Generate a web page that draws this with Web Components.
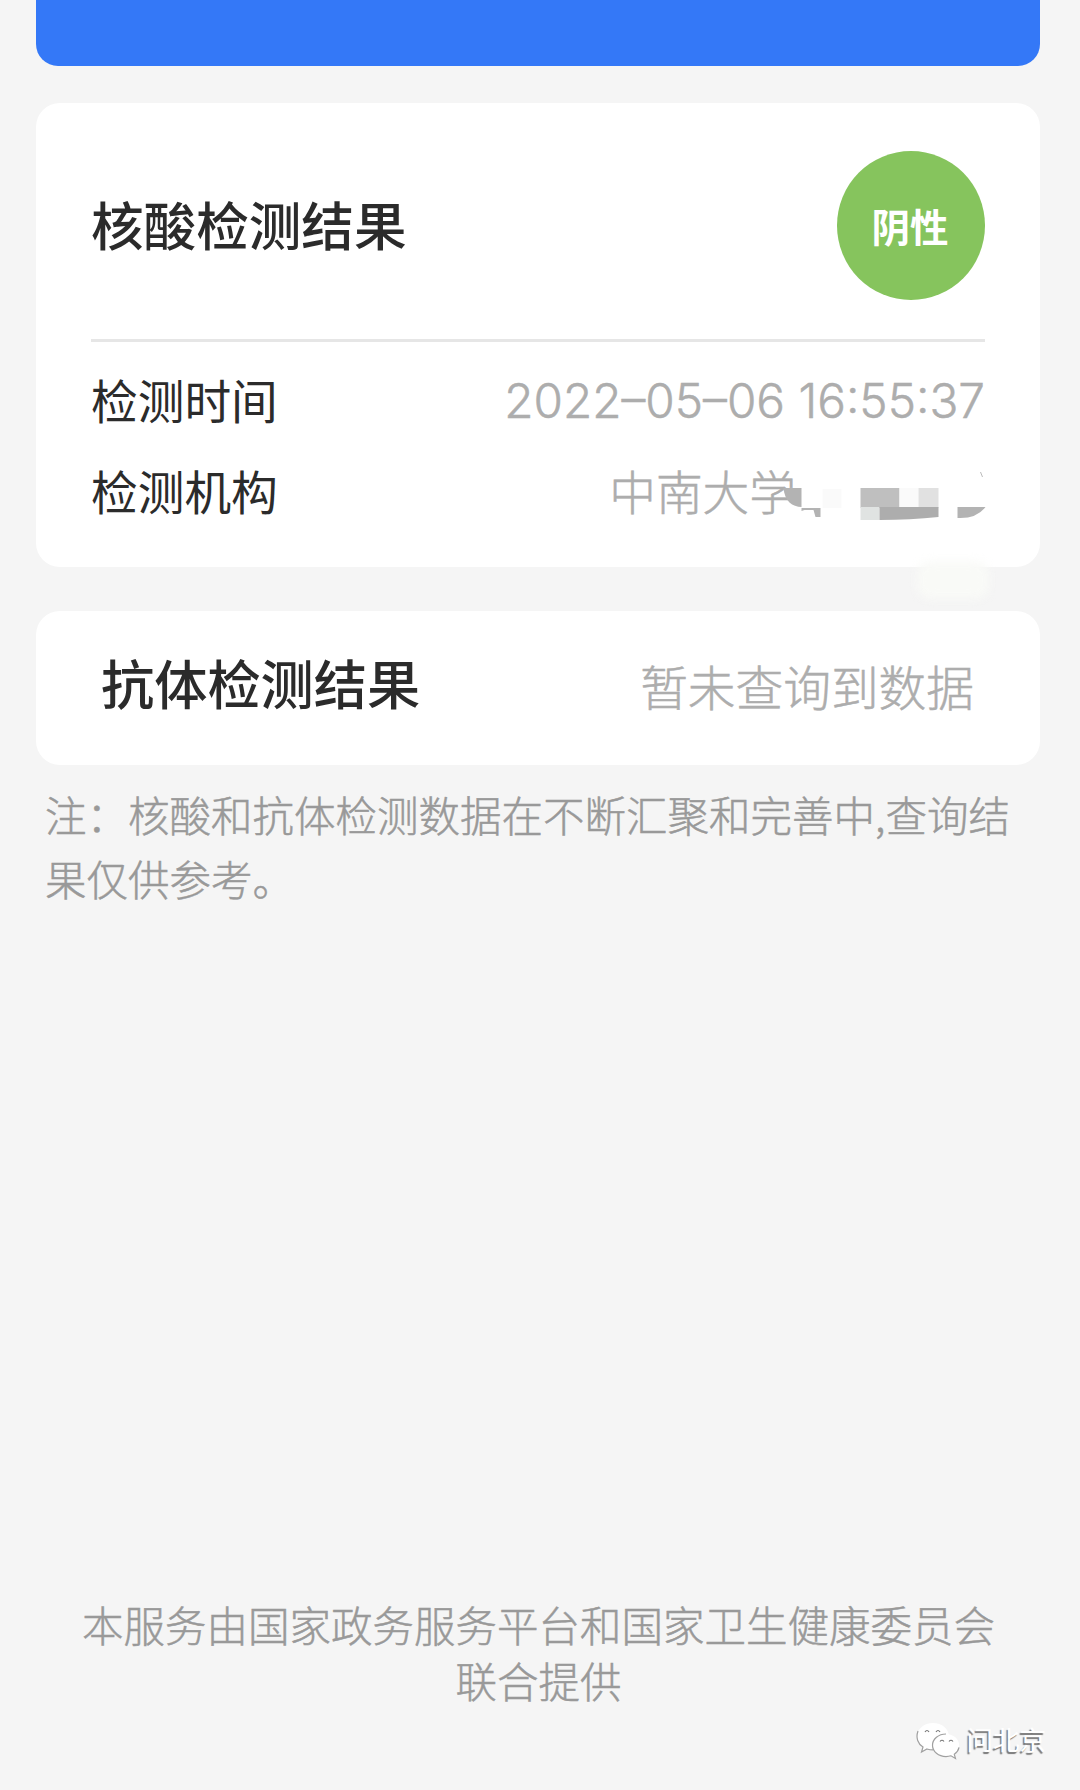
<!DOCTYPE html>
<html lang="zh-CN">
<head>
<meta charset="UTF-8">
<meta name="viewport" content="width=device-width, initial-scale=1.0">
<title>核酸检测结果</title>
<style>
    html, body {
        margin: 0;
        padding: 0;
        background: #f5f5f5;
    }

    body {
        font-family: "Noto Sans CJK SC", sans-serif;
        color: #2b2b2b;
    }
</style>
</head>
<body>
<result-page>
    <top-banner></top-banner>
    <result-card>
        <card-title>核酸检测结果</card-title>
        <status-badge slot="extra">阴性</status-badge>
        <info-row slot="rows" label="检测时间"><span class="date">2022–05–06 16:55:37</span></info-row>
        <info-row slot="rows" label="检测机构">中南大学<mosaic-mask></mosaic-mask></info-row>
    </result-card>
    <plain-card label="抗体检测结果">暂未查询到数据</plain-card>
    <note-text>注：核酸和抗体检测数据在不断汇聚和完善中,查询结果仅供参考。</note-text>
    <page-footer slot="footer">本服务由国家政务服务平台和国家卫生健康委员会<br>联合提供</page-footer>
    <account-mark slot="mark">问北京</account-mark>
</result-page>

<script>
function define(name, html) {
    customElements.define(name, class extends HTMLElement {
        connectedCallback() {
            if (this.shadowRoot) return;
            this.attachShadow({ mode: 'open' });
            this.shadowRoot.innerHTML = typeof html === 'function' ? html(this) : html;
        }
    });
}

define('result-page', `
    <style>
        :host {
            display: flex;
            flex-direction: column;
            position: relative;
            box-sizing: border-box;
            height: 1790px;
            padding: 0 40px 82px 36px;
            overflow: hidden;
        }
        .spacer { flex: 1; }
    </style>
    <slot></slot>
    <div class="spacer"></div>
    <slot name="footer"></slot>
    <slot name="mark"></slot>
`);

define('top-banner', `
    <style>
        :host {
            display: block;
            height: 66px;
            margin-bottom: 36.5px;
            background: #3478f7;
            border-radius: 0 0 22px 22px;
        }
    </style>
`);

define('result-card', `
    <style>
        :host {
            display: block;
            position: relative;
            box-sizing: border-box;
            height: 464.5px;
            margin-bottom: 44px;
            padding: 48.5px 55px 0 55px;
            background: #fff;
            border-radius: 24px;
        }
        header {
            display: flex;
            align-items: center;
            justify-content: space-between;
            height: 149px;
            padding-bottom: 39px;
            border-bottom: 3px solid #e6e6e6;
        }
        .rows { padding-top: 11px; }
        /* soft light spot under the lower right corner */
        .spot {
            position: absolute;
            left: 881px;
            top: 458px;
            width: 72px;
            height: 38px;
            border-radius: 14px;
            background: #f9faf7;
            filter: blur(5px);
        }
    </style>
    <header>
        <slot></slot>
        <slot name="extra"></slot>
    </header>
    <div class="rows"><slot name="rows"></slot></div>
    <div class="spot"></div>
`);

define('card-title', `
    <style>
        :host {
            display: block;
            padding-bottom: 6px;
            font-size: 52.6px;
            font-weight: 500;
            line-height: 60px;
            white-space: nowrap;
        }
    </style>
    <slot></slot>
`);

define('status-badge', `
    <style>
        :host {
            display: flex;
            align-items: center;
            justify-content: center;
            box-sizing: border-box;
            width: 148px;
            height: 149px;
            padding-right: 2px;
            border-radius: 50%;
            background: #86c45d;
            color: #fff;
            font-size: 38.5px;
            font-weight: 700;
            line-height: 1;
        }
    </style>
    <slot></slot>
`);

define('info-row', el => `
    <style>
        :host {
            display: flex;
            align-items: center;
            justify-content: space-between;
            height: 91.5px;
            font-size: 46.7px;
            line-height: 60px;
            white-space: nowrap;
        }
        .value {
            display: flex;
            color: #adadad;
            font-weight: 300;
            -webkit-text-stroke: .5px #adadad;
        }
        ::slotted(.date) {
            padding-top: 4px;
            font-family: Inter, "Noto Sans CJK SC", sans-serif;
            font-size: 47.7px;
        }
    </style>
    <span>${el.getAttribute('label')}</span>
    <span class="value"><slot></slot></span>
`);

define('mosaic-mask', `
    <style>
        :host { display: block; width: 189px; height: 60px; }
        svg { display: block; overflow: visible; }
    </style>
    <svg width="189" height="60" viewBox="796.5 461 189 60">
        <path d="M784 489h18v19c-9 0-17-6-18-19z" fill="#b3b3b3"/>
        <path d="M802 509h19v9h-5l-2-7h-9l-3 1z" fill="#b3b3b3"/>
        <path d="M823 490h19v19h-19z" fill="#fafafa"/>
        <path d="M861 489h39v20h-39z" fill="#bfbfbf"/>
        <path d="M900 489h19v20h-19z" fill="#fafafa"/>
        <path d="M919 489h20v20h-20z" fill="#e1e1e1"/>
        <path d="M861 508h19v13h-19z" fill="#e0e3e2"/>
        <path d="M880 508h59v10q-28 3-59 3z" fill="#adadad"/>
        <path d="M958 508h28q-9 12-28 11z" fill="#b3b3b3"/>
        <path d="M981 473l2 5" stroke="#bbb"/>
    </svg>
`);

define('plain-card', el => `
    <style>
        :host {
            display: flex;
            align-items: center;
            justify-content: space-between;
            box-sizing: border-box;
            height: 154px;
            margin-bottom: 17px;
            padding: 0 66px 12px 65px;
            background: #fff;
            border-radius: 24px;
            white-space: nowrap;
        }
        .label { font-size: 53.2px; font-weight: 500; line-height: 60px; }
        .value {
            padding-top: 8px;
            color: #adadad;
            font-size: 47.7px;
            font-weight: 300;
            line-height: 60px;
            -webkit-text-stroke: .5px #adadad;
        }
    </style>
    <span class="label">${el.getAttribute('label')}</span>
    <span class="value"><slot></slot></span>
`);

define('note-text', `
    <style>
        :host {
            display: block;
            padding: 0 20px 0 9px;
            color: #999;
            font-size: 41.5px;
            font-weight: 300;
            line-height: 64px;
            -webkit-text-stroke: .5px #999;
        }
    </style>
    <slot></slot>
`);

define('page-footer', `
    <style>
        :host {
            display: block;
            padding-left: 1px;
            color: #999;
            font-size: 41.5px;
            font-weight: 300;
            line-height: 55.5px;
            text-align: center;
            white-space: nowrap;
            -webkit-text-stroke: .5px #999;
        }
    </style>
    <slot></slot>
`);

define('account-mark', `
    <style>
        :host {
            display: flex;
            align-items: center;
            gap: 7px;
            position: absolute;
            right: 34px;
            bottom: 29px;
            color: #fff;
            font-size: 26.5px;
            line-height: 38px;
            text-shadow: -1.500px 1.500px 1px #777;
        }
        svg { display: block; }
        span { padding-bottom: 3px; }
    </style>
    <svg width="44" height="38" viewBox="0 0 44 38" fill="#fff" stroke="#a0a0a0" stroke-width="1.2">
        <path d="M17 1C8 1 1 7 1 14.500c0 4.500 2.300 8 6 10.500l-1.500 5 5.500-3c2 .6 4 .9 6 .9 9 0 16-6 16-13.400S26 1 17 1z" stroke="none"/>
        <path d="M2 9C-.5 16 2 22 7 25l-1.500 5 5.500-3c2 .6 4 .9 6 .9" fill="none"/>
        <path d="M30 12c-7.500 0-13.500 5-13.500 11.300S22.500 34.600 30 34.600c1.800 0 3.500-.3 5-.8l4.500 2.700-1.200-4.200c3-2.200 4.900-5.300 4.900-9C43.200 17 37.500 12 30 12z" stroke="none"/>
        <path d="M30 12c-7.500 0-13.500 5-13.500 11.300S22.500 34.600 30 34.600c1.800 0 3.500-.3 5-.8l4.500 2.700-1.200-4.200c2.500-1.800 4.200-4.300 4.700-7" fill="none"/>
        <g fill="none" stroke="#777">
            <path d="M9 10q2-3 4 0M20 10q2-3 4 0M24 19.500q2-2.500 4 0M33 19.500q2-2.500 4 0"/>
        </g>
    </svg>
    <span><slot></slot></span>
`);
</script>
</body>
</html>
